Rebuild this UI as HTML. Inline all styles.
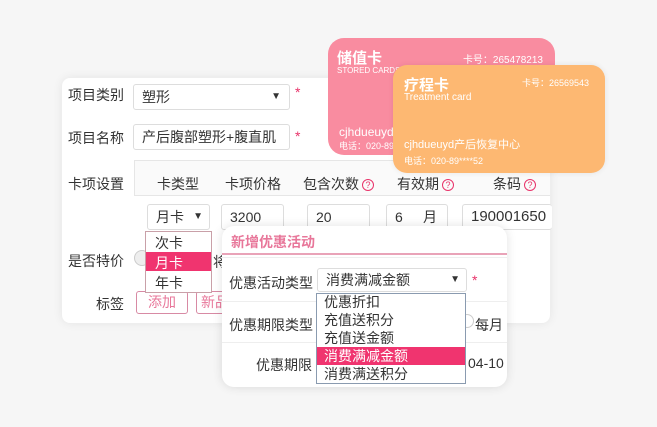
<!DOCTYPE html><html><head><meta charset="utf-8"><style>
*{margin:0;padding:0;box-sizing:border-box}
body{width:657px;height:427px;background:#f6f6f6;font-family:"Liberation Sans","Noto Sans CJK SC",sans-serif;font-size:14px;color:#333;position:relative;overflow:hidden}
.a{position:absolute;white-space:nowrap}
.in{position:absolute;border:1px solid #ddd;border-radius:3px;background:#fff;padding-left:8px;line-height:24px;font-size:14px}
.star{color:#e8336a}
.q{display:inline-block;width:12px;height:12px;border:1px solid #e8336a;border-radius:50%;color:#e8336a;font-size:9px;line-height:10px;text-align:center;vertical-align:1px;margin-left:3px}
</style></head><body>
<div class="a" style="left:62px;top:78px;width:488px;height:245px;background:#fff;border-radius:8px;box-shadow:0 0 10px rgba(0,0,0,.08)"></div>
<div class="a" style="left:68px;top:85px">项目类别</div>
<div class="in" style="left:133px;top:84px;width:157px;height:26px">塑形<span style="position:absolute;right:8px;font-size:10px">▼</span></div>
<div class="a star" style="left:295px;top:84px">*</div>
<div class="a" style="left:68px;top:128px">项目名称</div>
<div class="in" style="left:133px;top:124px;width:157px;height:26px">产后腹部塑形+腹直肌</div>
<div class="a star" style="left:295px;top:128px">*</div>
<div class="a" style="left:68px;top:174px">卡项设置</div>
<div class="a" style="left:134px;top:160px;width:416px;height:78px;border:1px solid #e6e6e6;border-right:none;background:#fafafa"></div>
<div class="a" style="left:134px;top:195px;width:416px;height:1px;background:#e6e6e6"></div>
<div class="a" style="left:134px;top:196px;width:416px;height:42px;background:#fff"></div>
<div class="a" style="left:157px;top:174px">卡类型</div>
<div class="a" style="left:225px;top:174px">卡项价格</div>
<div class="a" style="left:303px;top:174px">包含次数<span class="q">?</span></div>
<div class="a" style="left:397px;top:174px">有效期<span class="q">?</span></div>
<div class="a" style="left:493px;top:174px">条码<span class="q">?</span></div>
<div class="in" style="left:147px;top:204px;width:63px;height:26px">月卡<span style="position:absolute;right:6px;font-size:10px">▼</span></div>
<div class="in" style="left:221px;top:204px;width:63px;height:26px">3200</div>
<div class="in" style="left:307px;top:204px;width:63px;height:26px">20</div>
<div class="in" style="left:386px;top:204px;width:62px;height:26px">6<span style="position:absolute;right:10px">月</span></div>
<div class="in" style="left:462px;top:204px;width:90px;height:26px;border-right:none;font-size:15px">190001650</div>
<div class="a" style="left:68px;top:251px">是否特价</div>
<div class="a" style="left:134px;top:250px;width:16px;height:16px;border:1px solid #ccc;border-radius:50%;background:#eee"></div>
<div class="a" style="left:213px;top:252px">将</div>
<div class="a" style="left:96px;top:294px">标签</div>
<div class="a" style="left:136px;top:291px;width:52px;height:23px;border:1px solid #d88aa4;border-radius:3px;color:#e8779a;text-align:center;line-height:21px">添加</div>
<div class="a" style="left:196px;top:291px;width:40px;height:23px;border:1px solid #d88aa4;border-radius:3px;color:#e8779a;padding-left:4px;line-height:21px">新品</div>
<div class="a" style="left:145px;top:231px;width:67px;height:62px;background:#fff;border:1px solid #c9a0a8"></div>
<div class="a" style="left:155px;top:233px">次卡</div>
<div class="a" style="left:146px;top:252px;width:65px;height:19px;background:#f0346f"></div>
<div class="a" style="left:155px;top:253px;color:#fff">月卡</div>
<div class="a" style="left:155px;top:273px">年卡</div>
<!-- cards -->
<div class="a" style="left:328px;top:38px;width:227px;height:117px;background:#f98ca0;border-radius:16px;color:#fff">
<div class="a" style="left:9px;top:9px;font-size:15px;font-weight:bold">储值卡</div>
<div class="a" style="left:9px;top:28px;font-size:8px">STORED CARDS</div>
<div class="a" style="right:12px;top:13px;font-size:10px">卡号：265478213</div>
<div class="a" style="left:11px;top:85px;font-size:12px">cjhdueuyd产</div>
<div class="a" style="left:11px;top:101px;font-size:9px">电话：020-89</div></div>
<div class="a" style="left:393px;top:65px;width:212px;height:108px;background:#fdb872;border-radius:14px;color:#fff;box-shadow:0 0 6px rgba(0,0,0,.08)">
<div class="a" style="left:11px;top:9px;font-size:15px;font-weight:bold">疗程卡</div>
<div class="a" style="left:11px;top:27px;font-size:10px">Treatment card</div>
<div class="a" style="right:16px;top:11px;font-size:9px">卡号：26569543</div>
<div class="a" style="left:11px;top:71px;font-size:11px">cjhdueuyd产后恢复中心</div>
<div class="a" style="left:11px;top:89px;font-size:9px">电话：020-89****52</div></div>
<!-- popup -->
<div class="a" style="left:222px;top:226px;width:285px;height:161px;background:#fff;border-radius:12px;box-shadow:0 0 10px rgba(0,0,0,.12)"></div>
<div class="a" style="left:231px;top:232px;color:#e8779a;font-weight:bold;font-size:14px">新增优惠活动</div>
<div class="a" style="left:222px;top:253px;width:285px;height:2px;background:#e9a3b8"></div>
<div class="a" style="left:222px;top:257px;width:285px;height:1px;background:#eee"></div>
<div class="a" style="left:229px;top:273px">优惠活动类型</div>
<div class="in" style="left:317px;top:268px;width:150px;height:24px;line-height:22px">消费满减金额<span style="position:absolute;right:6px;font-size:10px">▼</span></div>
<div class="a star" style="left:472px;top:272px">*</div>
<div class="a" style="left:222px;top:301px;width:285px;height:1px;background:#eee"></div>
<div class="a" style="left:229px;top:315px">优惠期限类型</div>
<div class="a" style="left:460px;top:314px;width:14px;height:14px;border:1px solid #ccc;border-radius:50%"></div>
<div class="a" style="left:475px;top:315px">每月</div>
<div class="a" style="left:222px;top:342px;width:285px;height:1px;background:#eee"></div>
<div class="a" style="left:256px;top:355px">优惠期限</div>
<div class="a" style="left:468px;top:355px">04-10</div>
<div class="a" style="left:316px;top:293px;width:150px;height:91px;background:#fff;border:1px solid #8a9bb0"></div>
<div class="a" style="left:324px;top:293px;line-height:18px">优惠折扣<br>充值送积分<br>充值送金额</div>
<div class="a" style="left:317px;top:347px;width:148px;height:18px;background:#f0346f"></div>
<div class="a" style="left:324px;top:347px;line-height:18px;color:#fff">消费满减金额</div>
<div class="a" style="left:324px;top:365px;line-height:18px">消费满送积分</div>
</body></html>
